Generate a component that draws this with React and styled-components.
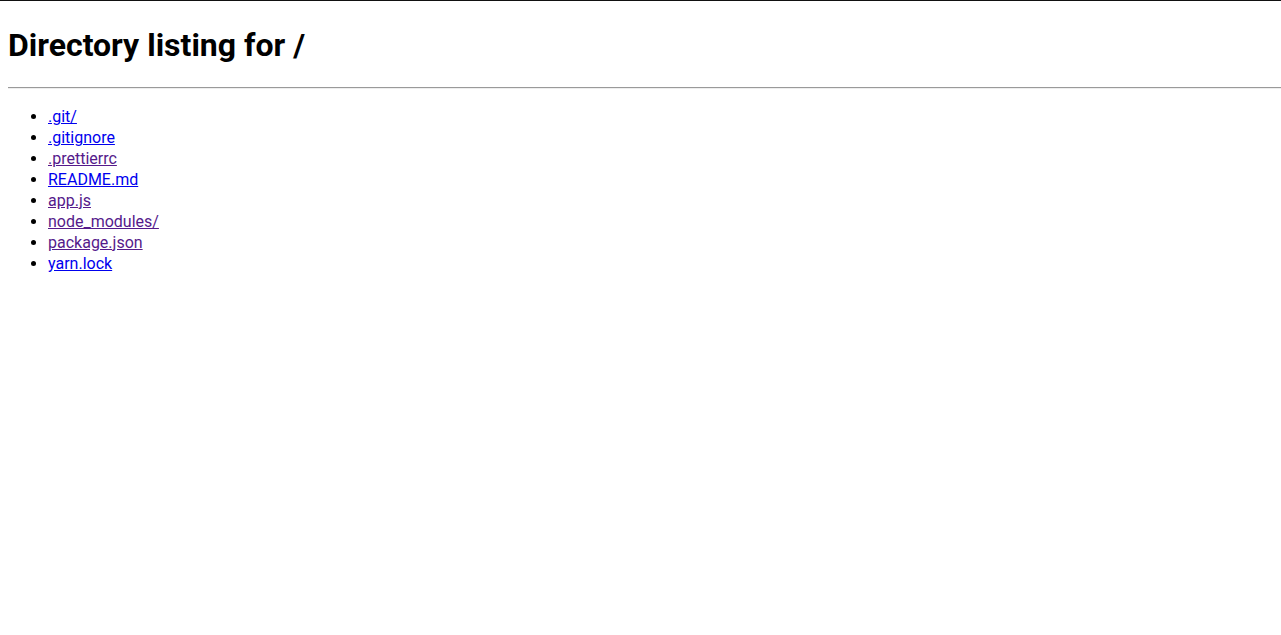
import styled, { createGlobalStyle } from "styled-components";

const GlobalStyle = createGlobalStyle`
  html {
    border-top: 1px solid #111;
  }
  body {
    margin: 8px 0 8px 8px;
    font-family: Roboto, "Liberation Sans", sans-serif;
    font-size: 16px;
    color: #000;
    background: #fff;
  }
`;

const Title = styled.h1`
  font-size: 2em;
  font-weight: 700;
  line-height: 37px;
  margin: 18px 0 23px;
`;

const Rule = styled.hr`
  margin: 0;
  border: none;
  border-top: 1px solid #9a9a9a;
  border-bottom: 1px solid #eee;
`;

const List = styled.ul`
  margin: 17px 0;
  padding-left: 40px;
`;

const Item = styled.li`
  line-height: 21px;
`;

const Link = styled.a`
  color: ${(props) => (props.visited ? "#551a8b" : "#0000ee")};
  text-decoration: underline;
`;

const files = [
  { name: ".git/", visited: false },
  { name: ".gitignore", visited: false },
  { name: ".prettierrc", visited: true },
  { name: "README.md", visited: false },
  { name: "app.js", visited: true },
  { name: "node_modules/", visited: true },
  { name: "package.json", visited: true },
  { name: "yarn.lock", visited: false },
];

export default function App() {
  return (
    <>
      <GlobalStyle />
      <Title>Directory listing for /</Title>
      <Rule />
      <List>
        {files.map((f) => (
          <Item key={f.name}>
            <Link href="#" visited={f.visited}>
              {f.name}
            </Link>
          </Item>
        ))}
      </List>
    </>
  );
}
